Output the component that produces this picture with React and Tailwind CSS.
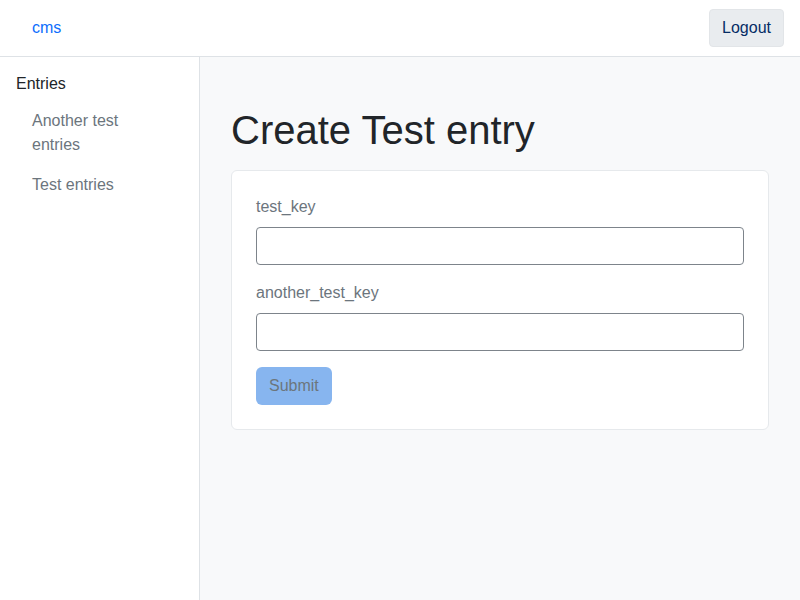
import React from "react";

const Field = ({ label }) => (
  <div className="mb-4">
    <label className="block mb-2 text-[#6c757d] leading-6">{label}</label>
    <input
      type="text"
      className="block w-full h-[38px] rounded-[4px] border border-[#7d848b] bg-white px-3"
    />
  </div>
);

const App = () => {
  return (
    <div
      className="min-h-[600px] flex flex-col bg-white text-base text-[#212529]"
      style={{ fontFamily: '"Liberation Sans", Arial, sans-serif' }}
    >
      <header className="h-[57px] flex items-center justify-between border-b border-[#dee2e6] pl-8 pr-4">
        <a href="#" className="text-[#0d6efd] leading-6">
          cms
        </a>
        <button className="h-[38px] px-3 rounded-[4px] border border-[#e2e5e8] bg-[#e9ecef] text-[#052c65]">
          Logout
        </button>
      </header>
      <div className="flex flex-1">
        <aside className="w-[200px] shrink-0 border-r border-[#dee2e6] pt-[15px]">
          <div className="px-4 leading-6">Entries</div>
          <ul className="mt-[5px]">
            <li className="px-8 py-2 leading-6 text-[#6c757d]">
              <a href="#" className="block w-[110px]">
                Another test entries
              </a>
            </li>
            <li className="px-8 py-2 leading-6 text-[#6c757d]">
              <a href="#">Test entries</a>
            </li>
          </ul>
        </aside>
        <main className="flex-1 bg-[#f8f9fa] px-[31px] pt-[49px]">
          <h1 className="text-[40px] leading-[48px] mb-4 font-normal">
            Create Test entry
          </h1>
          <div className="bg-white border border-[#e6e9ec] rounded-[6px] p-6">
            <Field label="test_key" />
            <Field label="another_test_key" />
            <button
              disabled
              className="h-[38px] px-[13px] rounded-[6px] bg-[#87b5ef] text-[#6c757d]"
            >
              Submit
            </button>
          </div>
        </main>
      </div>
    </div>
  );
};

export default App;
